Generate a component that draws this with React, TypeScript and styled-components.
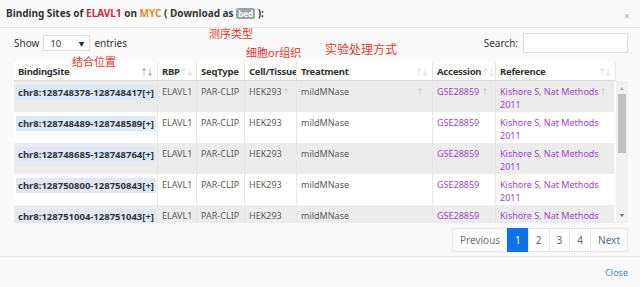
import React from 'react';
import styled, { createGlobalStyle } from 'styled-components';

const GlobalStyle = createGlobalStyle`
  html, body {
    margin: 0;
    padding: 0;
    background: #fafafa;
  }
  body {
    font-family: 'Noto Sans', 'Noto Sans CJK SC', sans-serif;
    font-size: 9.5px;
    color: #555;
  }
`;

const Modal = styled.div`
  position: relative;
  width: 640px;
  height: 287px;
  background: #fafafa;
  overflow: hidden;
`;

const Header = styled.div`
  height: 28px;
  border-bottom: 1px solid #e8e8e8;
  display: flex;
  align-items: center;
  justify-content: space-between;
  padding: 0 10px 0 6px;
  box-sizing: border-box;
`;

const Title = styled.h4`
  margin: 0 0 1px;
  font-size: 10px;
  font-weight: 700;
  color: #333;
`;

const Gene = styled.span<{ $color: string }>`
  color: ${(p) => p.$color};
`;

const BedTag = styled.span`
  display: inline-block;
  background: #9aa3ab;
  color: #fff;
  font-size: 8px;
  line-height: 11px;
  padding: 0 2px;
  border-radius: 2px;
`;

const CloseX = styled.span`
  color: #b8b8b8;
  font-size: 11px;
  margin-top: 4px;
`;

const Body = styled.div`
  padding: 5px 12px 0 14px;
`;

const Controls = styled.div`
  display: flex;
  align-items: center;
  justify-content: space-between;
  height: 20px;
  margin-bottom: 9px;
`;

const Length = styled.div`
  display: flex;
  align-items: center;
  gap: 4px;
  color: #333;
  font-size: 10px;
`;

const Select = styled.div`
  width: 47px;
  height: 16px;
  border: 1px solid #ddd;
  background: #fff;
  display: flex;
  align-items: center;
  justify-content: space-between;
  padding: 0 5px 0 6px;
  box-sizing: border-box;
  font-size: 9.5px;
  color: #333;

  span {
    font-size: 6px;
  }
`;

const SearchBox = styled.div`
  display: flex;
  align-items: center;
  gap: 5px;
  color: #333;
  font-size: 10px;
`;

const SearchInput = styled.div`
  width: 105px;
  height: 20px;
  border: 1px solid #ddd;
  background: #fff;
  box-sizing: border-box;
`;

const Annotation = styled.span<{ $x: number; $y: number; $size?: number }>`
  position: absolute;
  left: ${(p) => p.$x}px;
  top: ${(p) => p.$y}px;
  color: #e0372b;
  font-size: ${(p) => p.$size || 11}px;
  line-height: 1;
  white-space: nowrap;
  z-index: 5;
`;

const cols = [144, 39, 48, 52, 136, 63, 120];

const Grid = styled.div`
  display: grid;
  grid-template-columns: ${cols.map((c) => c + 'px').join(' ')};
`;

const HeadRow = styled(Grid)`
  width: 602px;
  background: #fff;
  border-bottom: 1px solid #ddd;
`;

const HeadCell = styled.div`
  position: relative;
  height: 18px;
  padding: 0 3px 0 4px;
  display: flex;
  align-items: center;
  justify-content: space-between;
  font-weight: 700;
  font-size: 9.5px;
  letter-spacing: -0.25px;
  color: #333;
  border-right: 1px solid #e6e6e6;
  overflow: hidden;
  white-space: nowrap;
  box-sizing: border-box;
`;

const SortIcon = styled.span<{ $active?: boolean }>`
  font-weight: 400;
  font-size: 8px;
  letter-spacing: -2px;
  color: ${(p) => (p.$active ? '#888' : '#d4d4d4')};
  padding-right: 2px;
`;

const TableBody = styled.div`
  display: flex;
  height: 142px;
`;

const Rows = styled.div`
  width: 602px;
  overflow: hidden;
`;

const ScrollBar = styled.div`
  width: 12px;
  margin-left: 2px;
  background: #f1f1f1;
  display: flex;
  flex-direction: column;
  align-items: center;
  padding: 3px 0;
  box-sizing: border-box;
`;

const Arrow = styled.div<{ $down?: boolean }>`
  width: 0;
  height: 0;
  border-left: 2.5px solid transparent;
  border-right: 2.5px solid transparent;
  ${(p) => (p.$down ? 'border-top: 3px solid #666;' : 'border-bottom: 3px solid #aaa;')}
  margin: 3px 0;
`;

const Thumb = styled.div`
  width: 8px;
  height: 59px;
  background: #c1c1c1;
  margin-top: 1px;
`;

const Spacer = styled.div`
  flex: 1;
`;

const Row = styled(Grid)<{ $odd: boolean }>`
  background: ${(p) => (p.$odd ? '#ececec' : '#fff')};
  height: 31px;
`;

const Cell = styled.div<{ $wrap?: boolean }>`
  position: relative;
  padding: 4px 3px 0 4px;
  box-sizing: border-box;
  border-right: 1px solid #e6e6e6;
  line-height: 13px;
  font-size: 9px;
  color: #5a5a5a;
  white-space: ${(p) => (p.$wrap ? 'normal' : 'nowrap')};
  overflow: hidden;
`;

const Site = styled.span`
  display: inline-block;
  font-weight: 700;
  font-size: 9.5px;
  color: #333;
  background: #dde9f6;
  white-space: nowrap;
  margin-left: -2px;
  padding: 1px 2px;
`;

const Link = styled.span`
  color: #9b45c9;
`;

const Ghost = styled.span<{ $right: number }>`
  position: absolute;
  right: ${(p) => p.$right}px;
  top: 4px;
  color: #c8c8c8;
  font-size: 8px;
`;

const Pager = styled.div`
  display: flex;
  justify-content: flex-end;
  margin-top: 5px;
`;

const PageBtn = styled.div<{ $active?: boolean; $muted?: boolean }>`
  height: 24px;
  padding: 0 7px;
  display: flex;
  align-items: center;
  box-sizing: border-box;
  border: 1px solid #e3e6ea;
  margin-left: -1px;
  background: ${(p) => (p.$active ? '#0d72e8' : '#fff')};
  border-color: ${(p) => (p.$active ? '#0d72e8' : '#e3e6ea')};
  color: ${(p) => (p.$active ? '#fff' : p.$muted ? '#6c757d' : '#4d6b8c')};
  font-size: 10px;
`;

const Footer = styled.div`
  position: absolute;
  left: 0;
  right: 0;
  bottom: 0;
  height: 30px;
  border-top: 1px solid #e8e8e8;
  display: flex;
  align-items: center;
  justify-content: flex-end;
  padding-right: 12px;
  font-size: 9px;
  color: #4f86c0;
`;

const headers = ['BindingSite', 'RBP', 'SeqType', 'Cell/Tissue', 'Treatment', 'Accession', 'Reference'];

const sites = [
  'chr8:128748378-128748417[+]',
  'chr8:128748489-128748589[+]',
  'chr8:128748685-128748764[+]',
  'chr8:128750800-128750843[+]',
  'chr8:128751004-128751043[+]',
];

const App = () => {
  return (
    <Modal>
      <GlobalStyle />
      <Header>
        <Title>
          Binding Sites of <Gene $color="#c42a3c">ELAVL1</Gene> on{' '}
          <Gene $color="#e08a2e">MYC</Gene> ( Download as <BedTag>bed</BedTag> ):
        </Title>
        <CloseX>×</CloseX>
      </Header>
      <Body>
        <Controls>
          <Length>
            Show
            <Select>
              10<span>▼</span>
            </Select>
            entries
          </Length>
          <SearchBox>
            Search:
            <SearchInput />
          </SearchBox>
        </Controls>
        <HeadRow>
          {headers.map((h, i) => (
            <HeadCell key={h}>
              {h}
              {i !== 2 && i !== 3 && <SortIcon $active={i === 0}>↑↓</SortIcon>}
            </HeadCell>
          ))}
        </HeadRow>
        <TableBody>
          <Rows>
            {sites.map((s, i) => (
              <Row key={s} $odd={i % 2 === 0}>
                <Cell>
                  <Site>{s}</Site>
                </Cell>
                <Cell>ELAVL1</Cell>
                <Cell>PAR-CLIP</Cell>
                <Cell>
                  HEK293
                  {i === 0 && <Ghost $right={6}>↑</Ghost>}
                </Cell>
                <Cell>
                  mildMNase
                  {i === 0 && <Ghost $right={8}>↑</Ghost>}
                </Cell>
                <Cell>
                  <Link>GSE28859</Link>
                  {i === 0 && <Ghost $right={6}>↑</Ghost>}
                </Cell>
                <Cell $wrap>
                  <Link>Kishore S, Nat Methods 2011</Link>
                  {i === 0 && <Ghost $right={8}>↑</Ghost>}
                </Cell>
              </Row>
            ))}
          </Rows>
          <ScrollBar>
            <Arrow />
            <Thumb />
            <Spacer />
            <Arrow $down />
          </ScrollBar>
        </TableBody>
        <Pager>
          <PageBtn $muted>Previous</PageBtn>
          <PageBtn $active>1</PageBtn>
          <PageBtn>2</PageBtn>
          <PageBtn>3</PageBtn>
          <PageBtn>4</PageBtn>
          <PageBtn>Next</PageBtn>
        </Pager>
      </Body>
      <Footer>Close</Footer>
      <Annotation $x={209} $y={28}>测序类型</Annotation>
      <Annotation $x={246} $y={47}>细胞or组织</Annotation>
      <Annotation $x={325} $y={44} $size={12}>实验处理方式</Annotation>
      <Annotation $x={72} $y={56}>结合位置</Annotation>
    </Modal>
  );
};

export default App;
